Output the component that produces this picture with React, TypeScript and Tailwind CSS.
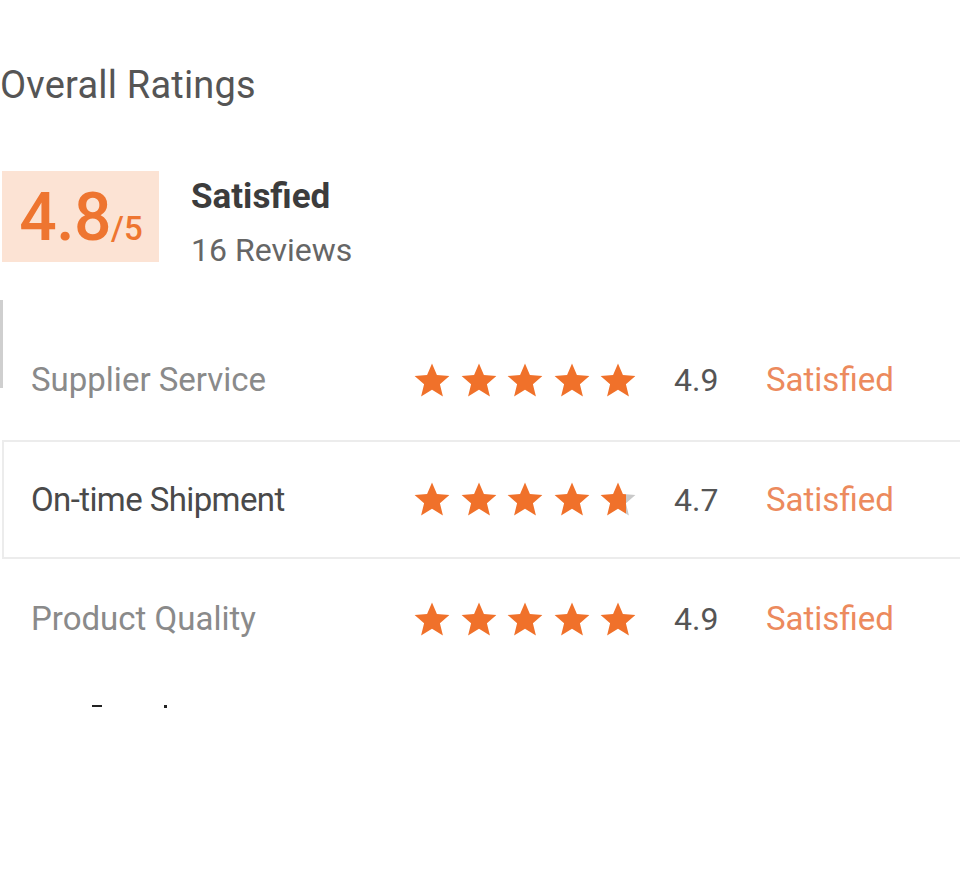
import { useId } from 'react';

const rows = [
  { label: 'Supplier Service', score: 4.9, boxed: false, dark: false },
  { label: 'On-time Shipment', score: 4.7, boxed: true, dark: true },
  { label: 'Product Quality', score: 4.9, boxed: false, dark: false },
];

function Star({ fill }: { fill: number }) {
  const id = useId();
  return (
    <svg width="38" height="37" viewBox="0 0 24 23">
      <defs>
        <linearGradient id={id} x1="0" x2="1" y1="0" y2="0">
          <stop offset={fill} stopColor="#f0712a" />
          <stop offset={fill} stopColor="#c9c9c9" />
        </linearGradient>
      </defs>
      <polygon
        points="12,0.8 15.1,8.1 23,8.6 17,13.8 18.9,21.6 12,17.4 5.1,21.6 7,13.8 1,8.6 8.9,8.1"
        fill={`url(#${id})`}
      />
    </svg>
  );
}

function Stars({ score }: { score: number }) {
  const last = score >= 4.8 ? 1 : 0.72;
  return (
    <div className="flex items-center gap-[8.5px]">
      {[1, 1, 1, 1, last].map((f, i) => (
        <Star key={i} fill={f} />
      ))}
    </div>
  );
}

export default function App() {
  return (
    <div className="w-[960px] h-[895px] bg-white font-['Roboto',sans-serif] overflow-hidden">
      <h2 className="pt-[66px] text-[38px] leading-[38px] text-[#555] tracking-[0.2px]">Overall Ratings</h2>

      <div className="mt-[67px] flex items-start gap-[32px] pl-[2px]">
        <div className="w-[157px] h-[91px] bg-[#fce3d4] flex items-baseline justify-center pt-[15px] pl-[1px]">
          <span className="text-[66px] leading-[64px] font-medium text-[#ee7530] tracking-[-0.5px]">4.8</span>
          <span className="text-[33px] leading-[33px] font-medium text-[#ee7530]">/5</span>
        </div>
        <div className="flex flex-col pt-[4px]">
          <span className="text-[35px] leading-[44px] font-bold text-[#3c3c3c]">Satisfied</span>
          <span className="text-[32px] leading-[44px] text-[#666] mt-[9px]">16 Reviews</span>
        </div>
      </div>

      <div className="mt-[48px] relative">
        <span className="absolute left-0 top-[-20px] w-[3px] h-[88px] bg-[#cfcfcf]" />
        {rows.map((r) => (
          <div
            key={r.label}
            className={
              r.boxed
                ? 'h-[119px] flex items-center border-y-2 border-l-2 border-[#ececec] ml-[2px] pl-[27px]'
                : 'h-[120px] flex items-center pl-[31px]'
            }
          >
            <span
              className={
                r.dark
                  ? 'w-[382px] text-[33px] text-[#4a4a4a] tracking-[-0.6px]'
                  : 'w-[382px] text-[33px] text-[#8a8a8a]'
              }
            >
              {r.label}
            </span>
            <Stars score={r.score} />
            <span className="ml-[37px] w-[92px] text-[32px] text-[#555]">{r.score}</span>
            <span className="text-[33px] text-[#ec8a5d]">Satisfied</span>
          </div>
        ))}
        <div className="h-[54px] flex items-center">
          <span className="ml-[92px] w-[10px] h-[2px] bg-[#222]" />
          <span className="ml-[62px] w-[3px] h-[3px] bg-[#222]" />
        </div>
      </div>
    </div>
  );
}
